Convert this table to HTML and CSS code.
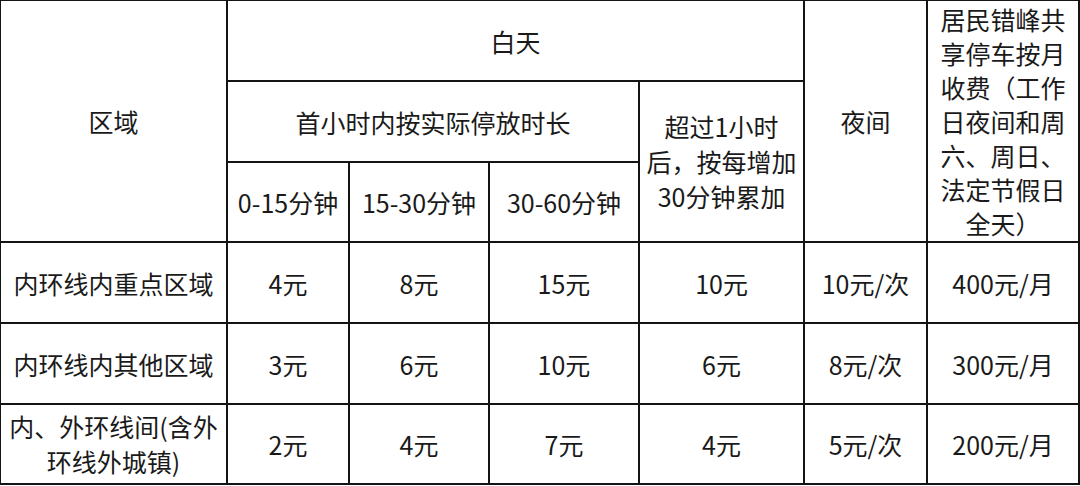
FILE: index.html
```html
<!DOCTYPE html>
<html lang="zh-CN">
<head>
<meta charset="utf-8">
<link rel="stylesheet" href="styles.css">
</head>
<body>
<table class="fee">
  <colgroup>
    <col class="c1"><col class="c2"><col class="c3"><col class="c4"><col class="c5"><col class="c6"><col class="c7">
  </colgroup>
  <tr class="r1">
    <td rowspan="3">区域</td>
    <td colspan="4">白天</td>
    <td rowspan="3">夜间</td>
    <td rowspan="3" class="tall">居民错峰共<br>享停车按月<br>收费（工作<br>日夜间和周<br>六、周日、<br>法定节假日<br>全天）</td>
  </tr>
  <tr class="r2">
    <td colspan="3">首小时内按实际停放时长</td>
    <td rowspan="2" class="multi">超过1小时<br>后，按每增加<br>30分钟累加</td>
  </tr>
  <tr class="r3">
    <td>0-15分钟</td>
    <td>15-30分钟</td>
    <td>30-60分钟</td>
  </tr>
  <tr class="r4">
    <td>内环线内重点区域</td>
    <td>4元</td>
    <td>8元</td>
    <td>15元</td>
    <td>10元</td>
    <td>10元/次</td>
    <td>400元/月</td>
  </tr>
  <tr class="r5">
    <td>内环线内其他区域</td>
    <td>3元</td>
    <td>6元</td>
    <td>10元</td>
    <td>6元</td>
    <td>8元/次</td>
    <td>300元/月</td>
  </tr>
  <tr class="r6">
    <td class="multi">内、外环线间(含外<br>环线外城镇)</td>
    <td>2元</td>
    <td>4元</td>
    <td>7元</td>
    <td>4元</td>
    <td>5元/次</td>
    <td>200元/月</td>
  </tr>
</table>
</body>
</html>
```

FILE: styles.css
```css
html, body {
  margin: 0;
  padding: 0;
  background: #ffffff;
}

body {
  width: 1080px;
  height: 486px;
  overflow: hidden;
}

.fee {
  border-collapse: collapse;
  table-layout: fixed;
  width: 1079px;
  margin: -1px 0 0 -1px;
  font-family: "Noto Sans CJK SC", "Noto Sans", sans-serif;
  font-size: 25px;
  color: #1a1a1a;
}

.fee td {
  border: 2px solid #141414;
  padding: 0;
  text-align: center;
  vertical-align: middle;
  line-height: 34px;
  white-space: nowrap;
  overflow: hidden;
}

.c1 { width: 227px; }
.c2 { width: 122px; }
.c3 { width: 140px; }
.c4 { width: 150px; }
.c5 { width: 165px; }
.c6 { width: 123px; }
.c7 { width: 152px; }

.r1 { height: 81px; }
.r2 { height: 81px; }
.r3 { height: 80px; }
.r4 { height: 81px; }
.r5 { height: 81px; }
.r6 { height: 80px; }

.fee td.multi {
  line-height: 35px;
}

.fee td.tall {
  line-height: 34px;
}
```
